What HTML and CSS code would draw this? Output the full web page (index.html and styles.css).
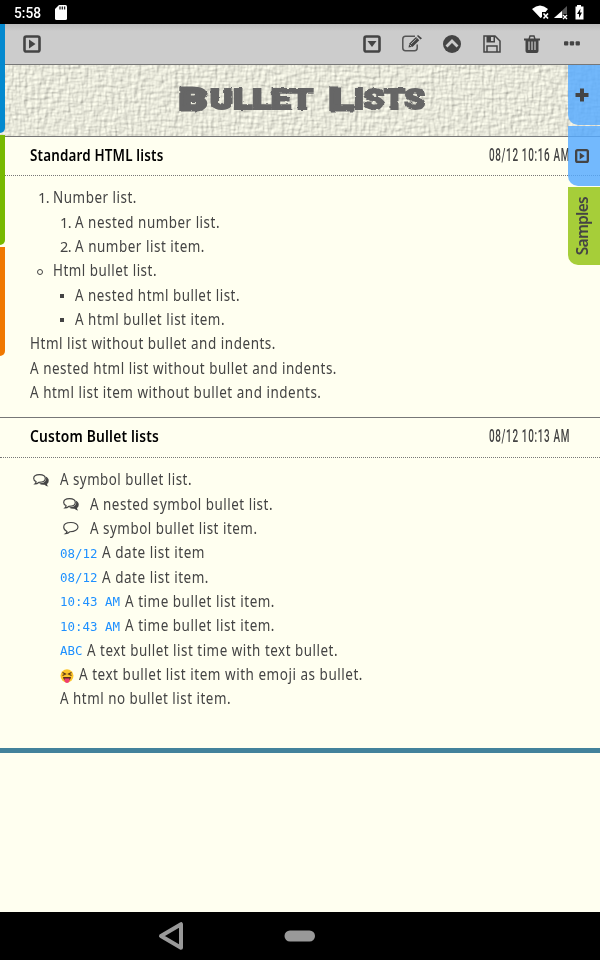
FILE: index.html
```html
<!DOCTYPE html>
<html lang="en">
<head>
<meta charset="utf-8">
<title>Bullet Lists</title>
<link rel="stylesheet" href="styles.css">
</head>
<body>
<div class="status">
  <span class="clock" data-w="27">5:58</span>
  <svg class="sd" width="12" height="15" viewBox="0 0 12 15"><path fill="#fff" d="M4 0h6.500Q12 0 12 1.500v12Q12 15 10.500 15h-9Q0 15 0 13.500V4z"/><path stroke="#222" stroke-width="1.300" d="M5 1.500v3M7.300 1.500v3M9.600 1.500v3"/></svg>
  <svg class="signals" width="54" height="18" viewBox="0 0 54 18">
    <path fill="#fff" d="M1 5Q9-2 17 5l-2.500 3H11v5l-1.500 1z"/><path stroke="#fff" stroke-width="1.600" d="M12.500 9.500l4.500 5M17 9.500l-4.500 5"/>
    <path fill="#555" d="M36 2v8h-4v4h-9z"/><path fill="#fff" d="M31 7v7h-8z"/><path stroke="#fff" stroke-width="1.300" d="M32 11l4 4M36 11l-4 4"/>
    <path fill="#fff" d="M46 1h4v1.500h2.500v13h-8v-13H46z"/><path fill="#000" d="M49.500 4.500L46 10h2v4l3-5.500h-2z"/>
  </svg>
</div>
<div class="toolbar">
  <svg class="play" width="18" height="18" viewBox="0 0 18 18"><rect x="1.500" y="1.500" width="15" height="15" rx="1.800" fill="none" stroke="#444" stroke-width="2.600"/><path fill="#444" d="M6 4.500v9l6.500-4.500z"/></svg>
  <div class="tools">
    <svg width="20" height="18" viewBox="0 0 20 18"><rect x="2.500" y="1.500" width="15" height="15" rx="1.800" fill="none" stroke="#444" stroke-width="2.600"/><path fill="#444" d="M5.500 6h9L10 12z"/></svg>
    <svg width="20" height="18" viewBox="0 0 20 18"><path fill="none" stroke="#555" stroke-width="1.500" d="M13 1.300H3.500Q.8 1.300.8 4v9q0 2.700 2.700 2.700h9q2.700 0 2.700-2.700V9.500"/><path fill="#444" d="M6.500 12.500l.8-4L14 2l3.300 3.200-6.600 6.500zM15 1l1-1 4 3.300-1.500 1.200z"/><path stroke="#ccc" stroke-width=".8" d="M9 9l5.500-5.300M7.500 9.500l2 2"/></svg>
    <svg width="20" height="18" viewBox="0 0 20 18"><circle cx="10" cy="9" r="9" fill="#444"/><path fill="none" stroke="#ccc" stroke-width="2.800" d="M4.500 11.500L10 6l5.500 5.500"/></svg>
    <svg width="20" height="18" viewBox="0 0 20 18"><path fill="none" stroke="#444" stroke-width="1.500" d="M2 1h11l5 5v11H2zM5 17v-6h10v6"/><path fill="#444" d="M4.500 1H13v6.500H4.500z"/><path fill="#ccc" d="M9 2h2.500v4H9z"/></svg>
    <svg width="20" height="18" viewBox="0 0 20 18"><path fill="#444" d="M2 3.500h4.500L7.500.3h5l1 3.200H18v2h-1.500V16q0 2-2 2h-9q-2 0-2-2V5.500H2z"/><path fill="#ccc" d="M8.500 1.800h3l.5 1.700H8z"/><path stroke="#ccc" stroke-width="1.200" d="M7 6.500V15M10 6.500V15M13 6.500V15"/></svg>
    <svg width="20" height="18" viewBox="0 0 20 18"><g fill="#444"><rect x="2" y="6.300" width="4.300" height="4.300" rx="1"/><rect x="7.800" y="6.300" width="4.300" height="4.300" rx="1"/><rect x="13.600" y="6.300" width="4.300" height="4.300" rx="1"/></g></svg>
  </div>
</div>
<div class="banner">
  <svg width="600" height="71" viewBox="0 0 600 71">
    <defs>
      <filter id="paper" x="0" y="0" width="100%" height="100%" color-interpolation-filters="sRGB">
        <feTurbulence type="fractalNoise" baseFrequency=".3 .09" numOctaves="3" seed="4" result="v"/>
        <feTurbulence type="fractalNoise" baseFrequency=".09 .32" numOctaves="3" seed="9" result="h"/>
        <feComposite in="v" in2="h" operator="arithmetic" k2=".5" k3=".5"/>
        <feDiffuseLighting surfaceScale="1.150" diffuseConstant="1.100" lighting-color="#eeeee0"><feDistantLight azimuth="225" elevation="62"/></feDiffuseLighting>
      </filter>
      <filter id="rough" x="-5%" y="-20%" width="110%" height="140%">
        <feTurbulence type="fractalNoise" baseFrequency=".2" numOctaves="1" seed="3"/>
        <feDisplacementMap in="SourceGraphic" scale="3" xChannelSelector="R" yChannelSelector="G"/>
      </filter>
    </defs>
    <rect width="600" height="71" fill="#e6e5d7" filter="url(#paper)"/>
    <g class="title" filter="url(#rough)">
      <text class="cap" x="179" y="45" textLength="28" lengthAdjust="spacingAndGlyphs">B</text>
      <text x="210" y="43.500" textLength="103" lengthAdjust="spacingAndGlyphs">ULLET</text>
      <text class="cap" x="329" y="45" textLength="24" lengthAdjust="spacingAndGlyphs">L</text>
      <text x="354" y="43.500" textLength="71" lengthAdjust="spacingAndGlyphs">ISTS</text>
    </g>
  </svg>
</div>
<main>
  <section>
    <header><h2 data-w="133.500">Standard HTML lists</h2><time data-w="81">08/12 10:16 AM</time></header>
    <div class="list">
      <div class="row l1"><i class="num">1.</i><span data-w="84">Number list.</span></div>
      <div class="row l2"><i class="num">1.</i><span data-w="145">A nested number list.</span></div>
      <div class="row l2"><i class="num">2.</i><span data-w="130">A number list item.</span></div>
      <div class="row l1"><i class="ring"></i><span data-w="104">Html bullet list.</span></div>
      <div class="row l2"><i class="square"></i><span data-w="165">A nested html bullet list.</span></div>
      <div class="row l2"><i class="square"></i><span data-w="150">A html bullet list item.</span></div>
      <div class="row"><span data-w="246">Html list without bullet and indents.</span></div>
      <div class="row"><span data-w="307">A nested html list without bullet and indents.</span></div>
      <div class="row"><span data-w="291.500">A html list item without bullet and indents.</span></div>
    </div>
  </section>
  <section class="custom">
    <header><h2 data-w="129">Custom Bullet lists</h2><time data-w="81">08/12 10:13 AM</time></header>
    <div class="list">
      <div class="row"><svg class="talk" viewBox="0 0 16 14"><use href="#chats"/></svg><span data-w="132">A symbol bullet list.</span></div>
      <div class="row in"><svg class="talk" viewBox="0 0 16 14"><use href="#chats"/></svg><span data-w="183">A nested symbol bullet list.</span></div>
      <div class="row in"><svg class="talk" viewBox="0 0 16 14"><path fill="none" stroke="#444" stroke-width="1.150" d="M4 10.500Q.7 9 .7 6C.7 3 4 1.500 8 1.500S15 3.500 15 6s-3 4.700-8 4.700Q5 12.700 2.500 12.700 4 11.700 4 10.500z"/></svg><span data-w="167.500">A symbol bullet list item.</span></div>
      <div class="row in"><code data-w="37.500">08/12</code><span data-w="103">A date list item</span></div>
      <div class="row in"><code data-w="37.500">08/12</code><span data-w="107">A date list item.</span></div>
      <div class="row in"><code data-w="60">10:43 AM</code><span data-w="150">A time bullet list item.</span></div>
      <div class="row in"><code data-w="60">10:43 AM</code><span data-w="150">A time bullet list item.</span></div>
      <div class="row in"><code data-w="22.500">ABC</code><span data-w="251">A text bullet list time with text bullet.</span></div>
      <div class="row in"><svg class="emoji" width="14" height="14" viewBox="0 0 14 14"><circle cx="7" cy="6.800" r="6.500" fill="#fcc52c"/><path fill="none" stroke="#59351a" stroke-width="1.200" d="M2.500 3.500L5.500 5l-3 1.500M11.500 3.500L8.500 5l3 1.500"/><path fill="#5b2c20" d="M3 8h8q-.5 4-4 4T3 8z"/><path fill="#ef3e70" d="M4.500 9.500h5V12q-.5 2-2.500 2t-2.500-2z"/></svg><span data-w="284">A text bullet list item with emoji as bullet.</span></div>
      <div class="row in"><span data-w="171">A html no bullet list item.</span></div>
    </div>
  </section>
</main>
<nav class="android">
  <svg width="600" height="48" viewBox="0 0 600 48"><path fill="none" stroke="#999" stroke-width="4" stroke-linejoin="round" d="M161 24l20-11.800v23.600z"/><rect x="284.500" y="18.500" width="30.500" height="11" rx="5.500" fill="#999"/></svg>
</nav>
<aside class="left"><b class="blue"></b><b class="green"></b><b class="orange"></b></aside>
<aside class="right">
  <div class="tab"><svg width="14" height="14" viewBox="0 0 14 14"><path stroke="#444" stroke-width="4" stroke-linecap="square" d="M7 2.500v9M2.500 7h9"/></svg></div>
  <div class="tab"><svg width="14" height="14" viewBox="0 0 18 18"><rect x="1.500" y="1.500" width="15" height="15" rx="1.800" fill="none" stroke="#444" stroke-width="3"/><path fill="#444" d="M6 4.500v9l6.500-4.500z"/></svg></div>
  <div class="tab samples"><span data-w="58">Samples</span></div>
</aside>
<svg class="defs" width="0" height="0"><symbol id="chats" viewBox="0 0 16 14"><path fill="#444" d="M12.500 3.500Q16 5 15.700 8q0 2-1.700 3 0 1.500 1.500 2.500-2.500 0-4-1.700-3.500.3-5.500-1.300 6-.5 7-3.500.5-2-.5-3.500z"/><path fill="#fffff0" stroke="#444" stroke-width="1.200" d="M3 8.500Q.7 7.500.7 5.500C.7 3 3 1.600 6.500 1.600S12.300 3 12.300 5.500 10 9.300 6 9.300Q4 11 2 11 3.200 10 3 8.500z"/></symbol></svg>
<script src="fit.js"></script>
</body>
</html>
```

FILE: styles.css
```css
* { box-sizing: border-box; }
body { margin: 0; width: 600px; height: 960px; overflow: hidden; position: relative; display: flex; flex-direction: column; background: #fffff0; color: #444; font: 15.5px "Noto Sans", sans-serif; }
svg { display: block; flex: none; }
.defs { position: absolute; }
[data-w] { white-space: nowrap; }
.status { height: 24px; flex: none; background: #000; color: #fff; display: flex; align-items: center; padding: 1px 15px 0 14px; font: 500 14px Roboto, sans-serif; }
.clock { width: 28px; }
.sd { margin-left: 14px; }
.signals { margin-left: auto; width: 54px; }
.toolbar { height: 41px; flex: none; display: flex; align-items: center; justify-content: space-between; padding: 0 18px 1px 23px; background: linear-gradient(#bbb, #ccc 7px); border-bottom: 1px solid #777; }
.tools { display: flex; gap: 20px; }
.banner { height: 72px; flex: none; border-bottom: 1px solid #777; }
.title { fill: #666; stroke: #666; stroke-width: 2px; font: 900 27px Roboto, sans-serif; }
.title .cap { font-size: 31px; stroke-width: 3px; }
main { height: 616px; flex: none; border-bottom: 5px solid #43829b; }
header { height: 39px; display: flex; align-items: center; justify-content: space-between; padding: 0 30px 3px; border-bottom: 1px dotted #777; }
h2 { margin: 0; font: 600 15.5px/20px "Noto Sans", sans-serif; letter-spacing: .2px; color: #000; }
time { width: 81px; height: 20px; font: 500 18px/20px Roboto, sans-serif; letter-spacing: 1.2px; }
.list { padding: 9px 30px 0; }
.row { height: 24.35px; display: flex; align-items: center; line-height: 24px; }
.row span { flex: none; letter-spacing: .6px; }
.row i { flex: none; font-style: normal; }
.l1 { padding-left: 8px; }
.l2 { padding-left: 30px; }
.num { width: 15px; font-size: 14.5px; letter-spacing: -.5px; will-change: transform; }
.ring { width: 6px; height: 6px; border: 1px solid #444; border-radius: 50%; margin: 3px 10px 0 -1px; }
.square { width: 4px; height: 4px; background: #444; margin: 3px 11px 0 0; }
.custom { border-top: 1px solid #777; margin-top: 13px; }
.custom header { height: 40px; padding-bottom: 4px; }
.in { padding-left: 30px; }
.talk { width: 16px; height: 14px; margin: 1px 11px 0 3px; }
code { flex: none; color: #1e90ff; font: 12.500px "DejaVu Sans Mono", monospace; margin: 2px 4.5px 0 0; }
.emoji { margin: 3px 5px 0 0; }
.android { height: 48px; margin-top: auto; background: #000; }
.left { position: absolute; left: 0; top: 24px; display: flex; flex-direction: column; gap: 2px; }
.left b { width: 5px; height: 109px; border-bottom-right-radius: 7px; }
.left .blue { background: #0489cf; }
.left .green { height: 110px; background: #77b900; }
.left .orange { background: #f07800; }
.right { position: absolute; right: 0; top: 65px; width: 32px; display: flex; flex-direction: column; gap: 1px; }
.tab { height: 60px; display: flex; align-items: center; justify-content: center; padding-right: 5px; background: rgba(84,169,255,.82); border-bottom-left-radius: 10px; }
.samples { height: 78px; background: #a6ce39; padding: 0 4px 0 0; }
.samples span { writing-mode: vertical-rl; transform: rotate(180deg); font: 600 15.500px "Noto Sans", sans-serif; line-height: 20px; }
```

FILE: fit.js
```js
// Scale each label horizontally to its declared length, keeping the layout box in step.
document.querySelectorAll('[data-w]').forEach(function (el) {
  var target = parseFloat(el.dataset.w);
  if (el.closest('.samples')) {
    el.style.letterSpacing = (target - el.offsetHeight) / el.textContent.length + 'px';
    return;
  }
  var range = document.createRange();
  range.selectNodeContents(el);
  var natural = range.getBoundingClientRect().width;
  el.style.width = target + 'px';
  el.style.transformOrigin = '0 50%';
  el.style.transform = 'scaleX(' + target / natural + ')';
});
```
